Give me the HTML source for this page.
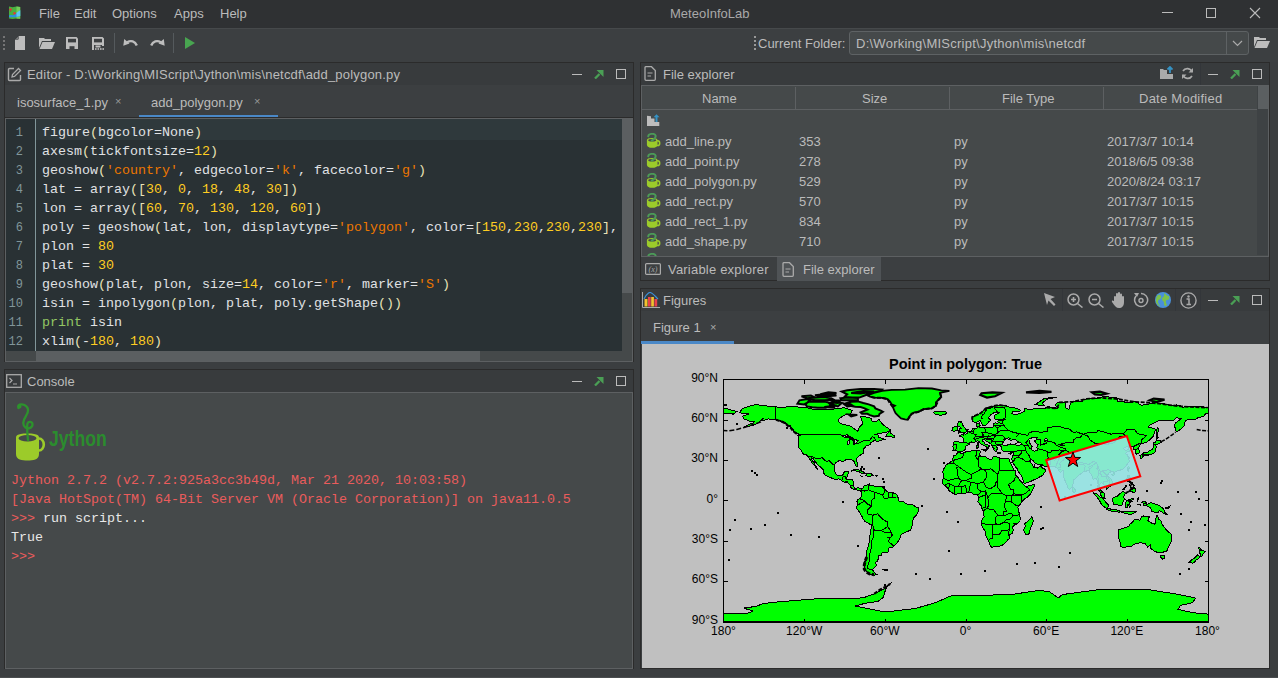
<!DOCTYPE html>
<html><head><meta charset="utf-8">
<style>
*{margin:0;padding:0;box-sizing:border-box}
html,body{width:1278px;height:678px;overflow:hidden;background:#3b3e40;font-family:"Liberation Sans",sans-serif;font-size:13px;color:#bbbbbb}
.a{position:absolute}
.t{position:absolute;white-space:pre;line-height:1}
.mono{font-family:"Liberation Mono",monospace;font-size:13.33px}
.hdr{position:absolute;background:#383b3d;border:1px solid #2b2b2b}
.ic{position:absolute}
</style></head><body>
<!-- menubar -->
<div class="a" style="left:0;top:0;width:1278px;height:28px;background:#2f3133"></div>
<svg class="ic" style="left:8px;top:6px" width="14" height="14" viewBox="0 0 14 14">
 <path d="M1 0.6L4.5 1.2L8.5 0.4L12.2 1V12.8L8.5 12.4L4.5 13L1 12.4Z" fill="#48b040"/>
 <path d="M8.5 0.4L12.2 1V12.8L8.5 12.4Z" fill="#74cc5a"/>
 <path d="M1 9.5C3 8.5 5 9.8 7 8.5C9 7.3 10.5 6 12.2 4.2V10C10 10.5 8 11.5 6 11.3C4 11 2.5 11.5 1 11Z" fill="#2d8fe0"/>
 <path d="M8.5 6.8L12.2 4.2V10L8.5 10.8Z" fill="#5cc8f0"/>
 <circle cx="2.6" cy="3.5" r="1.3" fill="#e03a3a"/><path d="M2.6 4.5V6" stroke="#a04040" stroke-width="0.6"/>
 <circle cx="6.5" cy="7.2" r="1.2" fill="#e03a3a"/>
</svg>
<div class="t" style="left:39px;top:7px;color:#bbbbbb">File</div>
<div class="t" style="left:74px;top:7px">Edit</div>
<div class="t" style="left:112px;top:7px">Options</div>
<div class="t" style="left:174px;top:7px">Apps</div>
<div class="t" style="left:220px;top:7px">Help</div>
<div class="t" style="left:670px;top:7px;color:#a9a9a9">MeteoInfoLab</div>
<div class="a" style="left:1162px;top:12px;width:11px;height:1px;background:#bbb"></div>
<div class="a" style="left:1206px;top:8px;width:10px;height:10px;border:1px solid #bbb"></div>
<svg class="ic" style="left:1249px;top:7px" width="12" height="12" viewBox="0 0 12 12"><path d="M1 1L11 11M11 1L1 11" stroke="#bbb" stroke-width="1.1"/></svg>

<!-- toolbar -->
<div class="a" style="left:0;top:28px;width:1278px;height:34px;background:#3c3f41;border-top:1px solid #46494b"></div>
<svg class="ic" style="left:2px;top:35px" width="4" height="16"><circle cx="2" cy="2" r="1" fill="#888"/><circle cx="2" cy="6" r="1" fill="#888"/><circle cx="2" cy="10" r="1" fill="#888"/><circle cx="2" cy="14" r="1" fill="#888"/></svg>
<svg class="ic" style="left:15px;top:36px" width="10" height="14" viewBox="0 0 10 14"><path d="M4 0H10V14H0V4Z" fill="#bdbdbd"/><path d="M3.2 0.5V3.2H0.5" stroke="#3c3f41" stroke-width="0.9" fill="none"/></svg>
<svg class="ic" style="left:39px;top:37px" width="16" height="12" viewBox="0 0 16 12"><path d="M0 1H5L6 2H12V4H3L0 11Z" fill="#bdbdbd"/><path d="M3.5 5H16L13 12H0.5Z" fill="#bdbdbd"/></svg>
<svg class="ic" style="left:66px;top:37px" width="12" height="12" viewBox="0 0 12 12"><path d="M0 0H10.5L12 1.5V12H0Z" fill="#bdbdbd"/><rect x="2" y="1.8" width="8" height="3.6" fill="#3c3f41"/><rect x="3.5" y="9.2" width="5" height="2.8" fill="#3c3f41"/></svg>
<svg class="ic" style="left:92px;top:37px" width="12" height="13" viewBox="0 0 12 13"><path d="M0 0H10.5L12 1.5V9H10V8H2V13H0Z" fill="#bdbdbd"/><rect x="2" y="1.8" width="8" height="3.6" fill="#3c3f41"/><rect x="3.5" y="8.5" width="5" height="2" fill="#bdbdbd"/><rect x="3" y="11.2" width="1.6" height="1.6" fill="#bdbdbd"/><rect x="5.5" y="11.2" width="1.6" height="1.6" fill="#bdbdbd"/><rect x="8" y="11.2" width="1.6" height="1.6" fill="#bdbdbd"/><rect x="10.4" y="11.2" width="1.6" height="1.6" fill="#bdbdbd"/></svg>
<div class="a" style="left:114px;top:33px;width:1px;height:20px;background:#555a5d"></div>
<svg class="ic" style="left:123px;top:38px" width="15" height="9" viewBox="0 0 15 9"><path d="M4 4.2C8 2.2 12 3 13.8 7.5" stroke="#bdbdbd" stroke-width="2.4" fill="none"/><path d="M0.3 7.8L1.2 1L6.5 5.5Z" fill="#bdbdbd"/></svg>
<svg class="ic" style="left:150px;top:38px" width="15" height="9" viewBox="0 0 15 9"><path d="M11 4.2C7 2.2 3 3 1.2 7.5" stroke="#bdbdbd" stroke-width="2.4" fill="none"/><path d="M14.7 7.8L13.8 1L8.5 5.5Z" fill="#bdbdbd"/></svg>
<div class="a" style="left:173px;top:33px;width:1px;height:20px;background:#555a5d"></div>
<svg class="ic" style="left:185px;top:37px" width="11" height="12" viewBox="0 0 11 12"><path d="M0 0L10 6L0 12Z" fill="#48a550"/></svg>
<svg class="ic" style="left:753px;top:35px" width="3" height="16"><rect x="1" y="1" width="2" height="2" fill="#999"/><rect x="1" y="5" width="2" height="2" fill="#999"/><rect x="1" y="9" width="2" height="2" fill="#999"/><rect x="1" y="13" width="2" height="2" fill="#999"/></svg>
<div class="t" style="left:758px;top:37px;color:#bbb">Current Folder:</div>
<div class="a" style="left:849px;top:31px;width:400px;height:24px;background:#45494a;border:1px solid #5e6264;border-radius:3px"></div>
<div class="a" style="left:1226px;top:32px;width:1px;height:22px;background:#5e6264"></div>
<svg class="ic" style="left:1232px;top:40px" width="11" height="7" viewBox="0 0 11 7"><path d="M1 1L5.5 5.5L10 1" stroke="#aaa" stroke-width="1.2" fill="none"/></svg>
<div class="t" style="left:856px;top:37px;color:#bbb;letter-spacing:0.25px">D:\Working\MIScript\Jython\mis\netcdf</div>
<svg class="ic" style="left:1254px;top:36px" width="16" height="12" viewBox="0 0 16 12"><path d="M0 1H5L6 2H12V4H3L0 11Z" fill="#bdbdbd"/><path d="M3.5 5H16L13 12H0.5Z" fill="#bdbdbd"/></svg>

<!-- ===== Editor panel ===== -->
<div class="a" style="left:4px;top:62px;width:630px;height:300px;background:#3c3f41;border:1px solid #2b2b2b"></div>
<div class="a" style="left:5px;top:63px;width:628px;height:22px;background:#383b3d"></div>
<svg class="ic" style="left:7px;top:67px" width="15" height="15" viewBox="0 0 15 15"><path d="M7 1.5H2.5A1 1 0 0 0 1.5 2.5V12.5A1 1 0 0 0 2.5 13.5H12.5A1 1 0 0 0 13.5 12.5V8" stroke="#aaa" stroke-width="1.4" fill="none"/><path d="M11.5 1.5L13.5 3.5L7.5 9.5L5 10L5.5 7.5Z" stroke="#aaa" stroke-width="1.3" fill="none"/></svg>
<div class="t" style="left:27px;top:68px;color:#bbb;letter-spacing:0.2px">Editor - D:\Working\MIScript\Jython\mis\netcdf\add_polygon.py</div>
<div class="a" style="left:572px;top:74px;width:10px;height:1px;background:#bbb"></div>
<svg class="ic" style="left:594px;top:69px" width="10" height="10" viewBox="0 0 10 10"><path d="M1 9.5L5.5 5" stroke="#4a9f55" stroke-width="2.3"/><path d="M2.5 1H9.5V8Z" fill="#4a9f55"/></svg>
<div class="a" style="left:616px;top:69px;width:10px;height:10px;border:1px solid #bbb"></div>
<!-- tabs -->
<div class="t" style="left:17px;top:96px;color:#bbb">isosurface_1.py</div>
<div class="t" style="left:115px;top:96px;font-size:11px;color:#999">×</div>
<div class="t" style="left:151px;top:96px;color:#bbb">add_polygon.py</div>
<div class="t" style="left:254px;top:96px;font-size:11px;color:#999">×</div>
<div class="a" style="left:139px;top:115px;width:139px;height:3px;background:#4a88c7"></div>
<!-- code area -->
<div class="a" style="left:4px;top:117px;width:630px;height:1px;background:#2b2b2b"></div>
<div class="a" style="left:5px;top:118px;width:628px;height:244px;border:1px solid #5d6062;background:#45494a"></div>
<div class="a" style="left:6px;top:119px;width:616px;height:232px;background:#293134"></div>
<div class="a" style="left:35px;top:119px;width:1px;height:232px;background:#81969a"></div>
<div class="a" style="left:36px;top:119px;width:586px;height:21px;background:#2f393c"></div>
<div class="a" style="left:622px;top:119px;width:10px;height:174px;background:#5b5f61"></div>
<div class="a" style="left:36px;top:351px;width:444px;height:10px;background:#5b5f61"></div>
<div class="a mono" style="left:5px;top:123.5px;width:18px;text-align:right;line-height:19px;font-size:12px;color:#81969a">1<br>2<br>3<br>4<br>5<br>6<br>7<br>8<br>9<br>10<br>11<br>12</div>
<div class="a mono" style="left:42px;top:122.5px;line-height:19px;color:#e0e2e4;white-space:pre">figure<span style="color:#e8e2b7">(</span>bgcolor=None<span style="color:#e8e2b7">)</span>
axesm<span style="color:#e8e2b7">(</span>tickfontsize=<span style="color:#ffcd22">12</span><span style="color:#e8e2b7">)</span>
geoshow<span style="color:#e8e2b7">(</span><span style="color:#ec7600">'country'</span>, edgecolor=<span style="color:#ec7600">'k'</span>, facecolor=<span style="color:#ec7600">'g'</span><span style="color:#e8e2b7">)</span>
lat = array<span style="color:#e8e2b7">([</span><span style="color:#ffcd22">30</span>, <span style="color:#ffcd22">0</span>, <span style="color:#ffcd22">18</span>, <span style="color:#ffcd22">48</span>, <span style="color:#ffcd22">30</span><span style="color:#e8e2b7">])</span>
lon = array<span style="color:#e8e2b7">([</span><span style="color:#ffcd22">60</span>, <span style="color:#ffcd22">70</span>, <span style="color:#ffcd22">130</span>, <span style="color:#ffcd22">120</span>, <span style="color:#ffcd22">60</span><span style="color:#e8e2b7">])</span>
poly = geoshow<span style="color:#e8e2b7">(</span>lat, lon, displaytype=<span style="color:#ec7600">'polygon'</span>, color=<span style="color:#e8e2b7">[</span><span style="color:#ffcd22">150</span>,<span style="color:#ffcd22">230</span>,<span style="color:#ffcd22">230</span>,<span style="color:#ffcd22">230</span><span style="color:#e8e2b7">]</span>,
plon = <span style="color:#ffcd22">80</span>
plat = <span style="color:#ffcd22">30</span>
geoshow<span style="color:#e8e2b7">(</span>plat, plon, size=<span style="color:#ffcd22">14</span>, color=<span style="color:#ec7600">'r'</span>, marker=<span style="color:#ec7600">'S'</span><span style="color:#e8e2b7">)</span>
isin = inpolygon<span style="color:#e8e2b7">(</span>plon, plat, poly.getShape<span style="color:#e8e2b7">())</span>
<span style="color:#93c763">print</span> isin
xlim<span style="color:#e8e2b7">(</span>-<span style="color:#ffcd22">180</span>, <span style="color:#ffcd22">180</span><span style="color:#e8e2b7">)</span></div>

<!-- ===== Console panel ===== -->
<div class="a" style="left:4px;top:369px;width:630px;height:300px;background:#3c3f41;border:1px solid #2b2b2b"></div>
<div class="a" style="left:5px;top:370px;width:628px;height:22px;background:#383b3d"></div>
<svg class="ic" style="left:6px;top:374px" width="16" height="14" viewBox="0 0 16 14"><rect x="0.7" y="0.7" width="14.6" height="12.6" stroke="#aaa" stroke-width="1.3" fill="none"/><path d="M3.5 4L6 6.5L3.5 9M7 10H11" stroke="#aaa" stroke-width="1.2" fill="none"/></svg>
<div class="t" style="left:27px;top:375px;color:#bbb">Console</div>
<div class="a" style="left:572px;top:381px;width:10px;height:1px;background:#bbb"></div>
<svg class="ic" style="left:594px;top:376px" width="10" height="10" viewBox="0 0 10 10"><path d="M1 9.5L5.5 5" stroke="#4a9f55" stroke-width="2.3"/><path d="M2.5 1H9.5V8Z" fill="#4a9f55"/></svg>
<div class="a" style="left:616px;top:376px;width:10px;height:10px;border:1px solid #bbb"></div>
<div class="a" style="left:5px;top:392px;width:628px;height:277px;border:1px solid #5d6062;background:#45494a"></div>
<!-- jython logo -->
<svg class="ic" style="left:0px;top:398px" width="50" height="66" viewBox="0 398 50 66">
 <path d="M27.5,433.5 C16,433.5 16,436 16,438 V454 C16,460 22,460.5 27.5,460.5 C33,460.5 39,460 39,454 V438 C39,436 39,433.5 27.5,433.5Z" fill="#9ccb2a"/>
 <ellipse cx="39" cy="444.5" rx="4.8" ry="6" stroke="#9ccb2a" stroke-width="2.6" fill="none"/>
 <ellipse cx="27.5" cy="438.3" rx="9" ry="3.2" fill="#45494a"/>
 <path d="M18.5,408 C17,404.5 21,403.5 24.5,405 C29.5,407.5 28.5,412 26,416 C23,420.5 22.5,425 25.5,427.5 C28.5,429.5 32.5,427.5 32.5,424.5 C32.5,421.5 28.5,421 27.5,423.5 C26.5,427 27.5,434 28,440" stroke="#2d922d" stroke-width="2.3" fill="none" stroke-linecap="round"/>
 <circle cx="19.5" cy="406.5" r="2" fill="#2d922d"/>
</svg>
<div class="t" style="left:49px;top:428px;color:#2b8c2e;font-size:22px;font-weight:bold;transform:scaleX(0.8);transform-origin:0 0">Jython</div>
<div class="a mono" style="left:11px;top:472px;line-height:18.9px;color:#ea5c5c;white-space:pre">Jython 2.7.2 (v2.7.2:925a3cc3b49d, Mar 21 2020, 10:03:58)
[Java HotSpot(TM) 64-Bit Server VM (Oracle Corporation)] on java11.0.5
&gt;&gt;&gt; <span style="color:#e8e8e8">run script...</span>
<span style="color:#e8e8e8">True</span>
&gt;&gt;&gt; </div>

<!-- ===== File explorer ===== -->
<div class="a" style="left:640px;top:62px;width:630px;height:219px;background:#3c3f41;border:1px solid #2b2b2b"></div>
<div class="a" style="left:641px;top:63px;width:628px;height:22px;background:#383b3d"></div>
<svg class="ic" style="left:644px;top:66px" width="12" height="15" viewBox="0 0 12 15"><path d="M1 1.5A1 1 0 0 1 2 0.7H7.5L11.3 4.5V13.3A1 1 0 0 1 10.3 14.3H2A1 1 0 0 1 1 13.3Z" stroke="#aaa" stroke-width="1.3" fill="none"/><path d="M3.5 7H8.5M3.5 10H7" stroke="#aaa" stroke-width="1.2"/></svg>
<div class="t" style="left:663px;top:68px;color:#bbb">File explorer</div>
<svg class="ic" style="left:1160px;top:66px" width="13" height="13" viewBox="0 0 13 13"><path d="M0 3H3L4 4H7V13H0Z M7 8H13V13H7Z" fill="#aaa"/><path d="M10 7V1M7.5 3.5L10 1L12.5 3.5" stroke="#3592c4" stroke-width="1.8" fill="none"/></svg>
<svg class="ic" style="left:1181px;top:67px" width="13" height="13" viewBox="0 0 13 13"><path d="M11 5A5 5 0 0 0 2 4M2 8A5 5 0 0 0 11 9" stroke="#aaa" stroke-width="1.7" fill="none"/><path d="M12 1V5.5H7.5Z M1 12V7.5H5.5Z" fill="#aaa"/></svg>
<div class="a" style="left:1200px;top:63px;width:1px;height:22px;background:#33363a"></div>
<div class="a" style="left:1208px;top:74px;width:10px;height:1px;background:#bbb"></div>
<svg class="ic" style="left:1230px;top:69px" width="10" height="10" viewBox="0 0 10 10"><path d="M1 9.5L5.5 5" stroke="#4a9f55" stroke-width="2.3"/><path d="M2.5 1H9.5V8Z" fill="#4a9f55"/></svg>
<div class="a" style="left:1252px;top:69px;width:10px;height:10px;border:1px solid #bbb"></div>
<!-- table -->
<div class="a" style="left:641px;top:85px;width:628px;height:172px;background:#45494a;border:1px solid #5d6062"></div>
<div class="a" style="left:642px;top:86px;width:615px;height:24px;background:#45494a;border-bottom:1px solid #5d6062"></div>
<div class="a" style="left:795px;top:87px;width:1px;height:22px;background:#5d6062"></div>
<div class="a" style="left:949px;top:87px;width:1px;height:22px;background:#5d6062"></div>
<div class="a" style="left:1103px;top:87px;width:1px;height:22px;background:#5d6062"></div>
<div class="t" style="left:702px;top:92px">Name</div>
<div class="t" style="left:862px;top:92px">Size</div>
<div class="t" style="left:1002px;top:92px">File Type</div>
<div class="t" style="left:1139px;top:92px;letter-spacing:0.25px">Date Modified</div>
<div class="a" style="left:1257px;top:86px;width:11px;height:169px;background:#3e4244"></div>
<div class="a" style="left:1258px;top:86px;width:10px;height:23px;background:#5b5f61"></div>
<svg class="ic" style="left:647px;top:114px" width="13" height="13" viewBox="0 0 13 13"><path d="M0 1.8L4 2.2V4.5H7.5V8H12.3V12H0Z" fill="#bdbdbd"/><path d="M9.5 8V2.5" stroke="#3592c4" stroke-width="2" fill="none"/><path d="M6.5 3.3L9.5 0.2L12.5 3.3Z" fill="#3592c4"/></svg>
<svg class="ic" style="left:646px;top:133px" width="16" height="16" viewBox="0 0 16 16"><path d="M0.9 7V11.5C0.9 14 3.5 14.8 6.2 14.8C9 14.8 11.5 14 11.5 11.5V7Z" fill="#9ccb2a"/><ellipse cx="6.2" cy="7" rx="5.3" ry="2.1" fill="#9ccb2a"/><ellipse cx="11.6" cy="10.2" rx="2.1" ry="2.4" stroke="#9ccb2a" stroke-width="1.5" fill="none"/><ellipse cx="6.2" cy="7.3" rx="4" ry="1.3" fill="#45494a"/><path d="M2.2 3.3C2.5 0.8 7.5 0 9.2 1.8C10.8 3.8 8.2 6 5.8 7.6" stroke="#4c9a58" stroke-width="1.9" fill="none" stroke-linecap="round"/></svg>
<div class="t" style="left:665px;top:135px">add_line.py</div>
<div class="t" style="left:799px;top:135px">353</div>
<div class="t" style="left:954px;top:135px">py</div>
<div class="t" style="left:1107px;top:135px">2017/3/7 10:14</div>
<svg class="ic" style="left:646px;top:153px" width="16" height="16" viewBox="0 0 16 16"><path d="M0.9 7V11.5C0.9 14 3.5 14.8 6.2 14.8C9 14.8 11.5 14 11.5 11.5V7Z" fill="#9ccb2a"/><ellipse cx="6.2" cy="7" rx="5.3" ry="2.1" fill="#9ccb2a"/><ellipse cx="11.6" cy="10.2" rx="2.1" ry="2.4" stroke="#9ccb2a" stroke-width="1.5" fill="none"/><ellipse cx="6.2" cy="7.3" rx="4" ry="1.3" fill="#45494a"/><path d="M2.2 3.3C2.5 0.8 7.5 0 9.2 1.8C10.8 3.8 8.2 6 5.8 7.6" stroke="#4c9a58" stroke-width="1.9" fill="none" stroke-linecap="round"/></svg>
<div class="t" style="left:665px;top:155px">add_point.py</div>
<div class="t" style="left:799px;top:155px">278</div>
<div class="t" style="left:954px;top:155px">py</div>
<div class="t" style="left:1107px;top:155px">2018/6/5 09:38</div>
<svg class="ic" style="left:646px;top:173px" width="16" height="16" viewBox="0 0 16 16"><path d="M0.9 7V11.5C0.9 14 3.5 14.8 6.2 14.8C9 14.8 11.5 14 11.5 11.5V7Z" fill="#9ccb2a"/><ellipse cx="6.2" cy="7" rx="5.3" ry="2.1" fill="#9ccb2a"/><ellipse cx="11.6" cy="10.2" rx="2.1" ry="2.4" stroke="#9ccb2a" stroke-width="1.5" fill="none"/><ellipse cx="6.2" cy="7.3" rx="4" ry="1.3" fill="#45494a"/><path d="M2.2 3.3C2.5 0.8 7.5 0 9.2 1.8C10.8 3.8 8.2 6 5.8 7.6" stroke="#4c9a58" stroke-width="1.9" fill="none" stroke-linecap="round"/></svg>
<div class="t" style="left:665px;top:175px">add_polygon.py</div>
<div class="t" style="left:799px;top:175px">529</div>
<div class="t" style="left:954px;top:175px">py</div>
<div class="t" style="left:1107px;top:175px">2020/8/24 03:17</div>
<svg class="ic" style="left:646px;top:193px" width="16" height="16" viewBox="0 0 16 16"><path d="M0.9 7V11.5C0.9 14 3.5 14.8 6.2 14.8C9 14.8 11.5 14 11.5 11.5V7Z" fill="#9ccb2a"/><ellipse cx="6.2" cy="7" rx="5.3" ry="2.1" fill="#9ccb2a"/><ellipse cx="11.6" cy="10.2" rx="2.1" ry="2.4" stroke="#9ccb2a" stroke-width="1.5" fill="none"/><ellipse cx="6.2" cy="7.3" rx="4" ry="1.3" fill="#45494a"/><path d="M2.2 3.3C2.5 0.8 7.5 0 9.2 1.8C10.8 3.8 8.2 6 5.8 7.6" stroke="#4c9a58" stroke-width="1.9" fill="none" stroke-linecap="round"/></svg>
<div class="t" style="left:665px;top:195px">add_rect.py</div>
<div class="t" style="left:799px;top:195px">570</div>
<div class="t" style="left:954px;top:195px">py</div>
<div class="t" style="left:1107px;top:195px">2017/3/7 10:15</div>
<svg class="ic" style="left:646px;top:213px" width="16" height="16" viewBox="0 0 16 16"><path d="M0.9 7V11.5C0.9 14 3.5 14.8 6.2 14.8C9 14.8 11.5 14 11.5 11.5V7Z" fill="#9ccb2a"/><ellipse cx="6.2" cy="7" rx="5.3" ry="2.1" fill="#9ccb2a"/><ellipse cx="11.6" cy="10.2" rx="2.1" ry="2.4" stroke="#9ccb2a" stroke-width="1.5" fill="none"/><ellipse cx="6.2" cy="7.3" rx="4" ry="1.3" fill="#45494a"/><path d="M2.2 3.3C2.5 0.8 7.5 0 9.2 1.8C10.8 3.8 8.2 6 5.8 7.6" stroke="#4c9a58" stroke-width="1.9" fill="none" stroke-linecap="round"/></svg>
<div class="t" style="left:665px;top:215px">add_rect_1.py</div>
<div class="t" style="left:799px;top:215px">834</div>
<div class="t" style="left:954px;top:215px">py</div>
<div class="t" style="left:1107px;top:215px">2017/3/7 10:15</div>
<svg class="ic" style="left:646px;top:233px" width="16" height="16" viewBox="0 0 16 16"><path d="M0.9 7V11.5C0.9 14 3.5 14.8 6.2 14.8C9 14.8 11.5 14 11.5 11.5V7Z" fill="#9ccb2a"/><ellipse cx="6.2" cy="7" rx="5.3" ry="2.1" fill="#9ccb2a"/><ellipse cx="11.6" cy="10.2" rx="2.1" ry="2.4" stroke="#9ccb2a" stroke-width="1.5" fill="none"/><ellipse cx="6.2" cy="7.3" rx="4" ry="1.3" fill="#45494a"/><path d="M2.2 3.3C2.5 0.8 7.5 0 9.2 1.8C10.8 3.8 8.2 6 5.8 7.6" stroke="#4c9a58" stroke-width="1.9" fill="none" stroke-linecap="round"/></svg>
<div class="t" style="left:665px;top:235px">add_shape.py</div>
<div class="t" style="left:799px;top:235px">710</div>
<div class="t" style="left:954px;top:235px">py</div>
<div class="t" style="left:1107px;top:235px">2017/3/7 10:15</div>
<div class="a" style="left:641px;top:253px;width:616px;height:3px;overflow:hidden"><svg class="ic" style="left:5px;top:0px" width="16" height="16" viewBox="0 0 16 16"><path d="M0.9 7V11.5C0.9 14 3.5 14.8 6.2 14.8C9 14.8 11.5 14 11.5 11.5V7Z" fill="#9ccb2a"/><ellipse cx="6.2" cy="7" rx="5.3" ry="2.1" fill="#9ccb2a"/><ellipse cx="11.6" cy="10.2" rx="2.1" ry="2.4" stroke="#9ccb2a" stroke-width="1.5" fill="none"/><ellipse cx="6.2" cy="7.3" rx="4" ry="1.3" fill="#45494a"/><path d="M2.2 3.3C2.5 0.8 7.5 0 9.2 1.8C10.8 3.8 8.2 6 5.8 7.6" stroke="#4c9a58" stroke-width="1.9" fill="none" stroke-linecap="round"/></svg></div>
<!-- bottom tabs -->
<div class="a" style="left:777px;top:257px;width:104px;height:24px;background:#4f5356"></div>
<svg class="ic" style="left:645px;top:263px" width="16" height="12" viewBox="0 0 16 12"><rect x="0.6" y="0.6" width="14.8" height="10.8" stroke="#aaa" stroke-width="1.2" fill="none" rx="1"/><text x="8" y="9" font-size="8" font-family="Liberation Serif" font-style="italic" fill="#aaa" text-anchor="middle">(x)</text></svg>
<div class="t" style="left:668px;top:263px;letter-spacing:0.2px">Variable explorer</div>
<svg class="ic" style="left:782px;top:262px" width="12" height="15" viewBox="0 0 12 15"><path d="M1 1.5A1 1 0 0 1 2 0.7H7.5L11.3 4.5V13.3A1 1 0 0 1 10.3 14.3H2A1 1 0 0 1 1 13.3Z" stroke="#aaa" stroke-width="1.3" fill="none"/><path d="M3.5 7H8.5M3.5 10H7" stroke="#aaa" stroke-width="1.2"/></svg>
<div class="t" style="left:803px;top:263px">File explorer</div>

<!-- ===== Figures ===== -->
<div class="a" style="left:640px;top:288px;width:630px;height:381px;background:#3c3f41;border:1px solid #2b2b2b"></div>
<div class="a" style="left:641px;top:289px;width:628px;height:22px;background:#383b3d"></div>
<svg class="ic" style="left:642px;top:292px" width="18" height="16" viewBox="0 0 18 16"><path d="M0.5 0V15.5H18" stroke="#aaa" stroke-width="1" fill="none"/><rect x="2.5" y="7" width="3" height="7.5" fill="#f2c12e"/><rect x="6" y="5" width="2.7" height="9.5" fill="#e8404a"/><rect x="9.2" y="5" width="2.7" height="9.5" fill="#f2c12e"/><rect x="12.4" y="7" width="2.8" height="7.5" fill="#e8404a"/><path d="M2 7C5 0.5 8 0 9 0.8C11 1.5 13 4 16 7" stroke="#3a8fd8" stroke-width="1.2" fill="none"/></svg>
<div class="t" style="left:663px;top:294px">Figures</div>
<svg class="ic" style="left:1044px;top:293px" width="12" height="13" viewBox="0 0 12 13"><path d="M0 0L11 4L6.5 6L11.5 11.5L10 13L4.5 7.5L3 12Z" fill="#aaa"/></svg>
<div class="a" style="left:1062px;top:289px;width:1px;height:22px;background:#33363a"></div>
<svg class="ic" style="left:1067px;top:293px" width="17" height="15" viewBox="0 0 17 15"><circle cx="6.5" cy="6.5" r="5.5" stroke="#aaa" stroke-width="1.5" fill="none"/><path d="M10.5 10.5L15.5 14.5M4 6.5H9M6.5 4V9" stroke="#aaa" stroke-width="1.6"/></svg>
<svg class="ic" style="left:1088px;top:293px" width="17" height="15" viewBox="0 0 17 15"><circle cx="6.5" cy="6.5" r="5.5" stroke="#aaa" stroke-width="1.5" fill="none"/><path d="M10.5 10.5L15.5 14.5M4 6.5H9" stroke="#aaa" stroke-width="1.6"/></svg>
<svg class="ic" style="left:1111px;top:292px" width="16" height="16" viewBox="0 0 16 16"><path d="M3 9V5A1 1 0 0 1 5 5V8V2A1 1 0 0 1 7 2V7V1A1 1 0 0 1 9 1V7V2.5A1 1 0 0 1 11 2.5V8V5A1 1 0 0 1 13 5V10C13 14 11 16 8 16C5 16 4 14 1 10C0.5 9 1.5 8 2.5 9Z" fill="#aaa"/></svg>
<svg class="ic" style="left:1133px;top:292px" width="16" height="16" viewBox="0 0 16 16"><path d="M3 4A6.5 6.5 0 1 0 8 1.5" stroke="#aaa" stroke-width="1.5" fill="none"/><path d="M1 1L4 5L6 1Z" fill="#aaa"/><circle cx="8" cy="8.5" r="2" stroke="#aaa" stroke-width="1.4" fill="none"/></svg>
<svg class="ic" style="left:1155px;top:292px" width="16" height="16" viewBox="0 0 16 16"><circle cx="8" cy="8" r="8" fill="#4a90d9"/><path d="M3 3C5 2 7 4 6 6C5 8 3 7 3 10C3 12 5 13 5 15L2 12C0 9 1 5 3 3Z M9 1C11 2 12 4 14 4C15 6 14 8 12 8C10 8 11 11 12 13C10 15 9 14 9 11C9 9 7 9 7 7C7 5 10 5 9 1Z" fill="#7cc04a"/></svg>
<div class="a" style="left:1175px;top:289px;width:1px;height:22px;background:#33363a"></div>
<svg class="ic" style="left:1180px;top:292px" width="17" height="17" viewBox="0 0 17 17"><circle cx="8.5" cy="8.5" r="7.6" stroke="#aaa" stroke-width="1.4" fill="none"/><circle cx="8.5" cy="4.5" r="1.2" fill="#aaa"/><path d="M6.5 7H9V12.5M6.5 12.5H11" stroke="#aaa" stroke-width="1.5" fill="none"/></svg>
<div class="a" style="left:1200px;top:289px;width:1px;height:22px;background:#33363a"></div>
<div class="a" style="left:1208px;top:300px;width:10px;height:1px;background:#bbb"></div>
<svg class="ic" style="left:1230px;top:295px" width="10" height="10" viewBox="0 0 10 10"><path d="M1 9.5L5.5 5" stroke="#4a9f55" stroke-width="2.3"/><path d="M2.5 1H9.5V8Z" fill="#4a9f55"/></svg>
<div class="a" style="left:1252px;top:295px;width:10px;height:10px;border:1px solid #bbb"></div>
<div class="t" style="left:653px;top:321px">Figure 1</div>
<div class="t" style="left:710px;top:322px;font-size:11px;color:#aaa">×</div>
<div class="a" style="left:641px;top:341px;width:93px;height:3px;background:#4a88c7"></div>
<div class="a" style="left:642px;top:344px;width:627px;height:324px;background:#c0c0c0"></div>
<div class="t" style="left:889px;top:357px;color:#000;font-weight:bold;font-size:14.5px">Point in polygon: True</div>
<svg width="486" height="244" viewBox="-0.5 -0.5 486 244" style="position:absolute;left:723px;top:379px;overflow:visible">
<defs><clipPath id="cp"><rect x="0" y="0" width="485" height="243"/></clipPath></defs>
<g clip-path="url(#cp)">

<path d="M16.1,32.8 18.8,29.2 22.9,27.6 31.6,25.1 37.6,25.8 47.1,26.9 52.4,27.3 59.2,28.2 64.5,27.2 69.9,26.6 75.3,27.6 83.4,28.2 88.7,29.6 96.8,29.6 104.9,30.2 110.2,29.6 114.3,28.9 121.0,28.2 125.0,29.6 129.1,30.9 126.4,35.0 121.0,35.6 115.6,39.0 115.0,41.7 117.6,44.4 123.7,45.7 127.7,46.8 131.1,49.7 134.4,51.8 135.8,47.7 138.5,45.0 138.5,41.7 137.1,37.2 143.9,37.6 147.9,39.0 148.6,41.7 153.3,41.9 155.3,39.9 159.3,45.0 164.0,48.4 167.4,50.7 162.7,53.1 156.0,53.8 151.9,54.9 155.3,55.8 155.3,57.8 160.0,59.2 161.3,59.8 156.0,61.2 153.3,62.1 151.9,60.8 149.2,61.8 147.2,63.2 147.2,64.8 145.2,65.6 142.5,66.4 141.2,68.6 139.8,69.6 139.8,71.3 140.2,73.3 138.5,74.6 135.8,76.4 133.1,78.6 133.1,80.7 134.2,84.7 133.8,87.1 132.8,87.0 131.1,84.0 130.7,82.0 129.1,80.7 126.4,80.1 122.3,80.3 120.3,81.9 115.6,81.2 111.6,83.6 110.9,87.4 110.5,90.8 111.6,93.0 113.6,95.7 115.0,96.5 119.0,96.1 120.3,93.4 121.0,92.5 125.0,92.1 124.4,94.8 123.4,98.1 123.0,99.8 126.4,99.8 129.1,100.4 130.0,102.2 129.5,106.2 131.8,108.9 135.1,108.2 137.8,109.6 138.2,110.5 137.1,111.6 134.4,110.9 133.1,110.2 129.7,109.8 127.0,107.6 126.8,105.9 124.4,103.5 121.7,102.9 119.0,102.2 117.0,100.2 115.0,99.4 112.3,99.9 109.6,99.2 105.5,97.5 101.5,95.5 100.2,93.4 100.4,90.8 98.8,89.4 96.8,87.4 95.1,86.0 92.8,83.5 91.0,81.3 90.1,79.3 87.8,78.4 88.5,80.7 90.8,83.4 91.4,85.4 93.4,88.5 94.1,90.1 92.1,88.1 91.2,86.0 88.7,83.8 87.4,81.3 86.0,79.3 84.6,77.3 82.7,75.3 79.9,74.6 78.2,71.9 77.3,70.2 75.7,68.6 74.9,66.6 74.9,63.9 75.3,59.2 74.3,56.1 76.6,55.8 73.9,53.8 70.6,52.4 69.9,50.4 67.2,47.7 64.5,45.7 61.8,43.0 57.8,41.9 54.5,40.6 49.7,40.3 45.0,39.4 41.7,40.5 38.3,41.4 39.7,38.7 36.3,41.7 35.0,43.3 31.6,45.0 28.2,46.2 24.2,47.1 20.8,47.7 24.9,45.4 29.6,43.3 30.9,41.9 26.9,42.2 24.2,40.6 20.8,39.7 19.8,37.9 18.8,37.0 20.8,36.0 25.5,34.4 22.2,34.1 18.8,34.3Z M137.8,109.6 139.8,108.2 140.5,106.5 143.9,105.5 145.9,104.3 146.5,106.2 148.6,105.4 150.6,106.7 153.3,106.7 156.0,106.6 158.6,106.6 160.0,108.9 161.3,109.8 163.4,111.9 165.4,112.9 169.4,113.2 172.1,114.4 173.4,115.6 174.8,118.6 174.8,121.0 176.8,122.3 180.2,122.3 182.2,124.4 185.5,124.8 188.9,125.0 192.3,127.5 194.7,128.4 194.9,131.8 193.6,134.4 191.6,137.1 189.6,139.1 189.3,144.5 188.2,147.9 186.9,150.6 184.2,151.9 181.5,152.9 178.1,154.6 176.8,157.3 176.1,160.0 174.1,162.7 172.1,164.7 170.1,166.7 168.7,168.1 166.0,168.1 164.7,170.1 164.7,172.4 161.3,173.2 158.6,173.4 158.2,175.5 154.6,176.1 155.3,178.1 153.9,181.5 151.2,183.5 153.3,185.5 150.6,188.2 149.2,190.2 149.9,191.6 151.9,194.3 154.6,194.9 150.6,195.6 146.5,194.9 142.5,191.6 140.5,188.2 140.5,184.2 141.8,181.5 143.2,178.8 142.9,176.1 143.2,172.1 143.9,169.4 145.2,165.4 145.9,161.3 146.1,157.3 147.2,153.3 147.6,147.9 147.5,145.6 145.9,144.3 141.2,141.6 139.4,139.1 138.5,137.1 136.5,133.8 135.1,131.1 133.1,129.1 133.1,127.1 134.4,125.4 133.8,123.7 133.4,122.3 134.4,120.3 135.1,119.7 136.1,118.6 137.4,117.5 138.1,115.6 137.8,112.9 137.4,111.3Z M229.2,71.3 229.9,68.6 229.2,67.2 230.2,64.5 229.6,62.9 231.2,62.2 235.3,62.5 239.6,62.7 240.3,61.2 240.4,59.2 239.0,57.8 236.0,56.6 235.7,55.7 238.0,55.4 239.8,55.5 240.1,54.3 242.0,54.6 244.0,53.5 244.3,52.4 246.0,52.0 247.4,51.8 248.5,50.4 248.7,49.3 251.4,49.1 253.7,48.5 253.4,47.1 253.0,45.0 253.4,44.2 256.1,43.4 255.8,45.0 256.8,45.7 255.4,47.1 256.7,48.4 258.5,48.0 260.8,48.4 263.5,48.0 266.9,47.5 268.6,47.9 270.2,47.1 270.5,45.0 270.2,43.7 272.2,43.3 274.3,44.4 274.7,42.6 273.6,41.7 276.3,40.9 280.3,40.6 282.3,40.3 279.6,39.7 275.6,39.9 272.8,40.5 270.9,39.3 270.6,37.6 270.9,35.9 274.3,33.9 276.0,32.9 272.9,32.5 270.9,32.9 267.5,35.2 265.9,37.0 265.1,38.7 266.9,40.3 267.3,41.3 264.9,42.2 264.2,44.0 262.8,45.4 261.1,46.4 259.2,46.4 258.8,45.0 257.9,43.0 257.1,41.5 256.1,41.3 254.8,41.7 252.8,42.9 250.7,42.9 249.4,41.9 248.7,40.3 248.7,39.0 249.0,37.4 251.4,36.3 254.1,35.0 256.8,33.9 258.8,32.3 260.8,30.2 262.8,28.9 264.9,28.2 267.5,26.9 270.2,26.6 274.3,25.5 277.6,25.5 279.6,25.5 282.3,26.2 283.7,26.9 286.4,27.7 290.4,28.2 294.4,29.3 297.1,30.9 295.8,32.3 289.1,32.3 288.4,34.3 291.7,35.2 295.8,34.3 299.8,32.3 301.2,31.6 301.4,29.3 303.8,29.6 307.9,29.8 313.3,28.9 315.9,29.2 321.3,28.9 324.0,27.3 329.4,27.8 333.4,28.9 334.8,28.4 332.1,26.2 331.8,24.9 334.1,23.0 336.1,22.9 339.5,23.1 342.4,23.1 341.5,28.2 345.5,30.0 346.9,23.8 350.2,22.2 354.9,21.9 359.0,21.5 359.0,19.9 363.0,19.4 369.7,18.8 376.4,18.3 381.8,16.5 385.9,17.7 391.2,17.9 394.6,19.1 393.9,21.9 399.3,22.2 402.0,22.7 407.4,22.9 411.4,22.2 414.8,23.1 416.1,25.1 418.1,25.8 421.5,24.9 424.8,24.7 429.5,23.7 431.6,23.3 438.3,23.8 443.7,24.9 446.4,25.8 453.1,25.5 457.1,26.2 458.5,27.6 463.8,27.4 467.9,26.9 471.2,26.9 474.6,27.2 478.6,27.3 482.0,27.7 484.7,28.4 484.7,33.6 482.0,34.3 480.0,37.0 475.3,37.9 470.6,40.3 465.2,40.3 462.5,40.6 461.1,43.0 461.1,45.7 459.8,47.5 457.1,49.7 455.1,51.1 452.7,52.4 451.7,49.1 451.1,45.7 451.7,43.7 453.1,43.0 455.8,40.6 457.8,39.0 453.1,38.3 449.0,41.4 445.7,41.4 441.0,41.3 436.9,41.1 433.6,41.7 430.9,43.3 427.5,45.0 424.2,47.5 426.2,48.4 428.2,48.4 429.5,49.1 432.0,49.7 430.9,53.1 430.2,56.5 428.2,58.1 425.9,60.5 423.5,62.5 420.8,63.5 418.8,63.5 417.7,64.1 416.4,65.9 416.1,67.2 414.1,68.6 415.8,70.6 416.0,73.3 412.7,74.6 411.8,74.3 411.9,71.7 411.5,70.3 410.1,70.2 410.3,68.2 409.4,67.5 406.7,66.8 405.1,68.6 405.5,66.1 403.3,67.0 400.6,68.3 400.2,69.4 401.9,70.6 402.8,71.0 404.4,70.2 406.7,71.0 405.8,71.8 403.6,72.6 402.0,74.2 403.9,75.3 404.5,77.2 405.9,78.2 405.1,79.9 406.0,80.7 405.3,82.8 404.0,84.4 402.8,86.0 402.0,87.1 400.4,88.5 398.6,90.1 395.9,90.8 394.6,91.0 392.6,91.7 390.6,93.4 389.9,92.2 387.9,92.0 385.5,93.4 384.1,95.7 385.9,98.1 388.3,100.3 388.9,103.5 388.5,105.5 386.5,106.9 383.3,109.3 382.9,107.3 381.2,106.7 379.8,104.6 377.7,103.1 376.4,104.9 375.4,107.6 376.8,110.2 378.5,111.9 380.5,113.6 381.2,115.4 381.0,118.0 382.1,119.1 381.2,119.4 378.2,117.2 377.1,115.2 376.7,112.5 374.4,110.0 374.2,107.8 374.6,104.9 373.9,102.9 373.4,99.5 372.4,98.4 370.4,99.8 369.0,99.2 368.6,96.5 367.3,94.4 366.0,92.8 365.0,90.8 363.7,91.4 361.7,91.7 360.2,92.1 358.8,93.4 356.5,94.8 354.5,96.5 352.5,98.7 350.9,99.8 349.8,100.8 349.8,102.9 349.3,105.5 348.6,107.2 347.3,109.0 346.2,110.1 344.8,109.0 344.2,107.3 343.1,104.9 342.2,102.2 340.8,99.5 339.9,95.5 339.9,92.8 339.5,91.0 336.8,93.0 334.8,91.0 336.4,90.2 334.1,89.3 332.5,87.8 331.4,86.9 328.0,87.0 324.7,87.3 322.1,86.9 319.2,86.3 318.4,84.6 316.6,84.8 314.6,85.2 312.6,84.2 311.2,83.5 309.4,80.8 307.9,80.3 306.5,80.7 306.4,81.7 307.6,84.0 309.2,85.2 309.5,86.6 310.3,87.7 311.0,85.9 311.4,87.1 311.2,88.3 313.9,88.6 316.6,86.9 317.7,85.6 317.8,87.5 319.3,89.0 320.9,89.3 322.4,90.9 320.7,93.4 319.6,95.5 318.1,96.5 316.3,97.3 312.2,99.6 308.7,101.1 306.5,102.2 303.2,103.3 300.5,103.9 299.4,99.9 299.5,98.8 297.4,95.5 295.8,93.4 294.6,92.1 293.8,89.4 292.4,88.1 291.1,86.0 289.3,83.4 288.5,83.1 288.9,81.3 288.0,78.9 288.4,78.5 289.1,76.6 290.1,74.3 290.3,72.9 290.7,71.8 288.7,71.5 285.7,72.5 283.1,71.7 281.9,72.3 279.6,71.7 278.7,70.7 277.6,69.2 278.0,67.9 277.2,66.4 277.0,66.1 274.3,66.1 272.9,66.8 274.3,69.6 272.7,70.7 273.2,71.9 271.2,71.5 270.4,70.2 270.6,68.8 269.2,67.9 268.1,64.8 266.9,63.9 264.2,62.5 262.4,61.4 261.5,60.2 260.4,59.7 258.5,60.1 258.5,61.3 260.3,62.5 261.4,64.5 263.5,65.2 265.5,66.1 266.9,67.0 265.1,66.7 264.2,67.9 265.0,68.7 263.6,69.9 263.1,67.2 262.2,67.0 261.0,66.1 258.9,65.3 256.8,63.9 255.7,62.0 254.0,61.3 252.1,62.1 250.1,63.1 248.0,62.5 246.2,63.1 246.3,64.7 244.7,65.6 243.1,65.9 242.0,67.2 241.6,68.2 242.3,69.0 241.1,70.4 239.2,71.7 236.1,71.7 234.7,72.6 233.3,71.4 231.9,71.0 229.9,71.3Z M-0.7,28.2 6.7,30.2 13.4,32.0 10.1,34.4 2.7,34.3 -0.7,33.9Z M234.1,72.9 232.9,75.2 230.4,76.2 229.1,80.0 228.6,81.3 226.3,83.2 224.5,83.9 222.5,85.8 220.5,89.0 219.1,92.8 220.2,94.8 219.8,98.8 218.6,101.1 219.4,103.3 219.5,104.3 221.4,106.2 223.6,108.2 224.7,110.2 226.5,111.9 229.2,113.6 231.8,115.1 234.6,114.1 238.0,114.1 240.0,114.3 243.3,113.1 245.4,112.5 247.9,112.7 249.9,115.2 251.4,115.1 253.4,114.8 254.4,115.9 255.2,117.6 254.8,119.7 254.4,122.3 256.1,124.4 257.9,126.4 258.5,129.1 259.5,131.5 260.3,135.1 260.6,137.1 258.8,139.3 257.9,143.2 257.9,145.2 259.7,148.6 261.5,151.8 261.9,155.3 263.1,158.0 264.2,159.5 265.3,162.0 266.5,163.6 266.2,164.8 266.9,166.7 268.2,167.8 270.9,167.2 272.9,166.7 276.3,166.6 278.3,166.0 280.3,164.7 282.3,162.9 284.1,160.5 285.6,159.3 286.2,156.2 286.0,155.3 289.1,153.9 289.7,150.6 289.5,149.2 288.8,147.6 291.5,145.2 294.2,144.0 296.5,141.7 296.6,137.8 296.2,135.0 295.1,131.8 294.7,129.7 294.3,127.7 295.5,126.1 297.0,124.4 298.5,122.3 300.5,119.9 303.8,117.9 306.3,115.4 307.9,112.9 309.5,109.6 310.6,106.9 311.0,105.1 307.2,105.8 304.5,106.5 301.8,107.0 300.3,105.4 299.3,104.2 297.8,102.2 295.8,100.2 294.7,98.4 293.6,96.8 292.3,95.6 292.0,92.8 291.5,91.2 289.7,89.8 289.7,88.7 288.5,86.3 287.6,84.4 286.6,83.0 285.8,80.8 285.4,78.9 283.7,78.5 281.9,79.1 279.6,79.3 275.9,78.5 272.9,77.3 270.2,76.9 268.9,78.0 268.5,79.9 266.9,80.1 264.9,79.3 262.8,78.2 262.4,77.4 258.9,76.9 256.8,76.2 255.8,75.0 256.8,73.3 256.5,71.3 255.2,70.9 253.3,71.4 250.5,71.1 248.0,71.4 245.4,71.9 243.3,71.9 241.3,72.9 239.0,73.8 237.0,73.5 235.3,73.0Z M394.6,150.6 395.0,156.0 395.5,159.3 396.6,162.7 396.6,166.7 400.6,168.1 404.7,166.6 408.0,166.7 411.4,164.4 415.4,163.5 418.1,163.4 421.5,164.0 424.2,167.8 426.9,165.4 427.3,168.7 430.2,171.4 434.9,173.2 438.7,173.4 441.0,171.8 443.7,171.4 444.7,167.4 447.0,164.0 448.4,159.3 448.0,154.6 445.0,152.6 443.0,150.6 440.3,147.2 438.3,144.5 437.5,141.2 435.3,139.8 433.6,135.4 432.4,138.5 432.2,143.2 430.9,144.5 429.3,144.3 426.2,142.2 424.2,140.9 425.8,137.4 423.5,137.1 420.1,136.5 418.1,137.4 416.1,140.9 413.4,139.8 410.7,140.5 408.7,143.2 406.3,144.5 405.3,146.9 401.3,148.4 398.9,148.7 395.9,150.3Z M162.0,57.1 166.7,56.9 170.7,58.1 171.1,56.5 167.4,53.8 166.7,51.8 164.7,53.1 162.7,55.8Z M308.3,137.1 309.8,141.4 309.0,144.1 307.2,148.6 305.5,154.3 302.8,155.3 300.9,152.6 300.2,149.9 301.7,147.2 301.4,143.9 304.2,142.1 306.5,139.6Z M436.5,175.7 441.4,176.0 440.8,179.1 439.0,179.6 437.2,177.9Z M474.2,167.2 476.6,168.7 478.5,171.1 482.0,171.7 480.0,173.8 478.6,176.5 477.0,176.5 477.3,174.8 475.7,173.7 476.7,171.4 474.9,168.3Z M474.2,175.5 476.3,177.1 474.9,179.1 472.2,180.8 471.2,182.6 469.2,183.7 465.8,182.8 467.9,180.6 471.2,178.5Z M234.3,53.8 238.0,53.0 240.7,52.8 243.9,52.2 243.1,51.4 244.3,50.1 242.4,49.7 242.0,48.9 240.4,47.6 239.8,46.2 238.6,45.7 239.6,43.6 237.4,43.4 237.8,42.2 235.3,42.2 234.2,43.7 234.5,45.3 233.7,46.1 235.5,47.3 237.4,47.9 237.7,49.2 235.8,49.3 236.4,50.7 235.0,51.5 237.7,51.9 236.4,52.2Z M233.9,50.8 233.9,49.5 234.3,47.5 231.9,46.7 230.4,47.6 228.6,48.4 228.7,50.0 228.2,51.4 231.0,51.6Z M211.8,35.0 209.7,32.9 212.4,31.7 217.8,32.0 221.8,31.7 223.7,33.5 221.8,34.6 217.1,35.8 213.8,35.2Z M311.9,24.9 315.9,25.9 320.7,26.1 318.6,23.5 324.0,19.5 333.4,17.7 329.4,17.5 320.0,19.5 315.9,22.2Z M-0.7,24.9 3.4,24.9 2.7,25.8 -0.7,25.8Z M432.6,59.0 434.9,58.5 433.6,56.5 434.5,52.4 434.7,49.1 433.7,48.0 433.2,51.1 432.6,55.1 432.9,57.1Z M418.0,74.9 420.1,73.4 424.2,73.1 426.1,70.9 428.2,70.2 430.2,67.9 430.2,65.6 432.1,65.3 432.9,67.9 431.6,69.9 431.6,71.9 431.3,73.1 430.0,74.1 428.6,74.5 426.2,74.5 424.6,76.0 423.5,74.5 420.8,74.9 418.8,75.4Z M430.2,65.2 430.0,63.5 432.2,62.5 432.8,60.0 434.9,61.4 437.3,61.4 437.6,62.8 434.7,64.5 431.8,64.8Z M416.5,76.2 417.2,78.9 418.5,78.8 419.5,76.0 418.1,75.3Z M420.1,76.6 420.8,75.0 423.0,75.0 422.6,76.2Z M403.6,90.3 404.7,91.6 405.9,87.7 405.3,87.0 404.4,87.7Z M388.1,95.1 390.3,94.0 391.2,94.6 389.9,96.4 388.8,96.3Z M403.7,96.3 406.3,96.1 406.7,98.1 405.5,100.0 406.0,102.2 408.7,102.9 408.0,103.9 405.3,102.6 404.1,101.8 403.3,99.4 404.0,98.4Z M406.0,111.7 407.2,110.5 408.7,109.7 410.7,107.8 412.1,109.6 411.8,112.3 410.6,113.5 408.7,112.3Z M399.6,109.7 402.7,105.8 403.1,106.9 400.6,109.8Z M409.4,104.2 411.0,106.2 409.8,107.6Z M406.0,105.1 407.4,106.3 407.6,108.6 406.7,106.9Z M388.5,119.0 389.5,118.3 391.5,117.6 393.9,116.7 395.3,114.9 397.3,113.9 399.0,111.9 400.2,112.4 402.3,113.9 400.6,114.9 400.4,118.3 402.0,119.8 400.0,120.9 399.3,123.0 398.6,125.3 398.0,126.4 396.3,126.4 393.9,125.3 391.2,125.0 390.2,124.9 389.9,123.0 388.5,121.7Z M370.1,113.5 373.1,114.0 374.7,115.9 377.1,118.2 378.6,118.6 381.2,121.0 382.5,123.0 384.5,125.0 384.5,127.1 384.2,128.8 382.8,128.9 381.2,127.7 379.5,126.4 377.8,124.5 376.7,122.3 375.1,120.3 374.4,118.7 372.8,117.0 371.6,115.8Z M383.4,130.1 385.2,129.1 387.9,129.7 390.6,130.1 393.2,130.3 395.9,131.5 395.8,132.7 392.6,132.0 389.9,131.9 387.2,131.4 385.2,130.9Z M396.6,132.3 398.6,132.4 401.3,132.2 406.0,132.4 407.4,132.2 410.1,132.0 412.7,132.2 410.1,133.9 408.0,134.8 403.3,134.4 399.3,133.1Z M402.0,128.4 403.9,128.5 404.0,124.8 404.8,124.8 406.0,127.5 407.4,127.3 405.5,123.6 407.8,122.3 405.1,122.2 404.1,121.3 404.7,119.7 407.1,119.8 409.8,118.8 409.4,120.5 403.6,120.6 403.1,121.1 401.7,124.6 402.5,125.7Z M413.6,119.7 414.8,118.0 414.5,120.7 414.1,122.1Z M414.1,125.3 417.9,125.7 416.1,124.8Z M418.0,122.7 419.5,121.5 422.2,122.2 423.5,125.4 426.9,123.0 430.2,124.2 433.6,125.3 436.3,126.2 438.0,127.7 440.3,129.3 440.7,131.8 441.7,133.1 443.7,134.8 444.6,135.1 443.0,134.8 440.3,134.4 439.0,133.0 436.3,131.2 434.7,132.0 434.5,133.1 433.6,133.5 431.6,133.2 429.8,131.9 428.2,132.2 427.1,128.1 424.2,126.9 422.2,126.1 420.8,126.4 419.5,124.8 421.5,124.1 419.5,123.7Z M441.7,128.4 443.7,128.4 446.4,126.6 445.7,128.4 443.7,129.5Z M349.4,107.8 350.8,108.9 352.1,110.9 351.3,112.7 349.7,112.9 349.2,110.5Z M127.7,91.6 130.4,90.1 133.8,89.8 137.8,91.4 140.5,92.8 142.2,93.8 137.8,94.2 137.1,92.9 133.8,91.7 131.1,91.2Z M141.8,96.1 144.1,94.2 147.9,94.4 150.0,96.0 147.9,96.5 145.9,97.3 143.9,96.7Z M136.7,96.3 139.4,96.8 138.5,97.1Z M151.7,96.1 153.8,96.4 153.3,96.8Z M159.3,189.8 164.0,189.8 163.4,191.2 160.7,190.9Z M258.7,70.0 263.0,69.5 262.3,71.7Z M253.0,65.9 255.0,65.9 254.8,68.4 253.3,68.6Z M253.6,63.7 254.8,63.2 254.6,65.3Z M273.6,73.3 277.4,73.5 275.2,74.1Z M285.4,73.9 288.4,73.1 287.0,74.5Z M-0.7,242.0 -0.7,234.3 22.9,234.3 29.6,231.6 20.2,228.6 32.3,226.9 40.3,223.9 53.8,222.5 73.9,220.8 103.5,218.5 129.1,219.5 141.2,217.8 150.6,214.4 161.3,209.1 168.1,203.0 164.0,206.4 161.3,212.4 160.0,217.8 154.6,221.8 141.2,223.9 131.8,226.5 147.9,229.9 162.0,232.5 177.5,230.6 191.9,229.0 211.3,223.4 227.2,216.5 246.0,215.9 262.2,215.8 289.7,214.7 314.6,211.1 325.4,211.8 334.8,218.5 338.8,215.1 352.2,213.2 379.1,209.7 422.2,209.7 454.4,214.8 471.9,218.5 469.2,223.2 457.1,225.9 454.4,229.9 463.8,231.9 473.2,233.7 484.7,234.6 484.7,242.0Z" fill="#00ff00" stroke="#000" stroke-width="1" shape-rendering="crispEdges"/>
<path d="M121.0,24.2 127.7,22.2 134.4,21.9 139.8,23.5 145.2,24.9 150.6,26.9 151.9,28.9 157.3,31.2 159.3,32.3 156.0,34.3 155.3,36.3 150.6,37.0 146.5,35.6 143.9,34.3 138.5,34.3 137.1,32.9 143.9,30.2 141.2,28.9 137.1,27.6 131.8,27.2 126.4,26.2 122.3,25.5Z M82.0,24.9 84.7,22.2 94.1,22.2 102.2,22.2 106.9,23.5 106.2,26.9 102.2,28.2 94.1,28.2 88.7,27.8 83.4,26.9Z M73.9,24.2 76.0,20.8 84.0,19.5 86.7,21.5 80.7,24.9Z M121.0,17.5 129.1,18.1 135.8,18.1 142.5,15.5 147.9,13.4 157.3,11.4 158.6,10.1 150.6,9.4 137.1,9.4 123.7,10.8 118.3,12.1 123.7,14.8Z M118.3,20.8 134.4,20.8 134.4,18.4 123.7,18.1 117.0,18.8Z M125.0,35.0 133.8,35.4 127.7,37.0Z M104.9,23.5 112.9,22.9 118.3,23.5 114.3,26.9Z M83.4,18.8 100.8,17.5 107.6,18.8 110.2,20.2 100.8,20.8 91.4,20.8Z M91.4,15.7 107.6,14.1 112.9,16.1 103.5,16.8Z M107.6,22.9 111.6,20.8 117.0,21.1 114.3,23.5Z M78.0,16.8 87.4,16.1 91.4,18.1 83.4,18.8Z M96.8,14.8 104.9,12.8 112.9,13.4 107.6,15.5Z M127.7,13.4 139.8,11.4 150.6,12.1 137.1,14.1Z M123.7,26.9 129.1,26.2 126.4,24.2 121.0,24.9Z M100.8,27.6 111.6,26.2 110.2,28.2Z" fill="#00ff00" stroke="#000" stroke-width="2"/>
<path d="M143.9,15.9 150.6,13.4 158.6,11.4 168.1,10.4 181.5,10.1 194.9,8.7 208.4,9.0 217.8,10.8 225.9,11.4 216.5,13.4 217.8,17.5 215.1,20.2 212.4,22.9 212.4,26.2 208.4,28.9 200.3,29.6 194.9,32.3 190.9,32.9 188.2,34.3 185.5,37.6 184.2,40.3 181.5,39.9 177.5,39.0 174.8,36.3 172.1,33.6 170.7,30.9 169.4,27.6 171.4,26.2 168.1,24.9 166.7,22.2 164.0,19.5 158.6,18.4 150.6,18.1 146.5,17.1Z" fill="#00ff00" stroke="#000" stroke-width="1.8"/>
<path d="M256.8,15.5 263.5,18.1 271.6,16.8 278.3,13.4 268.9,12.8 258.1,13.7Z M371.1,14.8 377.8,15.5 383.2,14.1 376.4,12.1 368.4,12.8Z M426.2,20.8 432.9,22.6 441.0,20.2 430.2,19.1Z M302.5,12.8 315.9,13.4 328.0,12.4 315.9,11.4Z" fill="#00ff00" stroke="#000" stroke-width="2.2"/>
<path d="M279.0,63.9 279.6,65.5 281.0,65.6 283.7,65.6 287.0,64.5 290.4,64.9 293.8,66.0 297.8,65.2 298.1,63.9 295.5,62.5 293.4,61.3 291.7,60.2 289.7,60.1 287.0,61.2 285.7,60.0 287.0,59.2 284.6,58.3 283.0,59.2 281.8,60.2 280.6,61.4 279.6,62.9Z M305.2,59.8 308.1,58.5 310.8,57.8 313.5,58.2 313.3,60.1 311.0,61.2 312.6,63.7 314.6,65.2 314.3,66.4 313.3,68.2 314.3,70.9 310.6,71.7 307.9,70.3 307.7,68.8 308.5,67.0 307.2,64.8 305.9,63.2 305.7,61.2Z M118.3,55.8 123.7,55.4 128.4,58.1 125.0,58.5 121.0,58.1Z M123.7,61.8 124.4,64.8 125.7,64.5 126.4,59.4 128.0,59.4 131.1,62.5 131.8,59.8 134.4,61.2 132.4,63.9 135.8,63.5 130.4,64.8 129.1,59.4Z M322.7,58.5 324.7,60.5 321.3,61.8 320.7,59.8Z" fill="#c0c0c0" stroke="#000" stroke-width="1" shape-rendering="crispEdges"/>
<path d="M37.6,42.4 29.6,45.0 21.5,47.7 13.4,50.0 5.4,51.4 -0.7,51.1" fill="none" stroke="#000" stroke-width="1.5" stroke-dasharray="5 2"/>
<path d="M76.6,55.1 114.3,55.1 114.3,54.6 121.7,56.5 128.4,58.5 131.1,60.1 130.4,64.5 135.8,63.5 139.1,61.8 141.6,60.5 146.5,60.5 148.6,57.3 150.8,57.8 151.9,60.5 M52.4,27.3 52.4,39.9 57.8,41.7 63.2,45.0 67.2,46.4 M84.6,77.3 87.8,77.0 92.8,78.9 96.5,78.9 98.8,78.2 101.5,81.2 103.5,82.0 105.7,80.9 108.2,84.0 111.3,86.2 M118.0,101.5 119.7,97.1 122.1,97.1 122.1,99.6 M121.9,101.6 123.7,102.3 124.4,103.3 M126.8,106.1 129.5,106.3 M130.5,110.1 130.9,108.1 M138.1,110.2 141.2,111.6 144.5,110.9 145.2,105.9 M145.2,110.9 151.2,112.7 150.8,119.0 148.6,119.7 147.9,126.4 143.9,124.4 141.2,121.3 136.1,119.1 M151.2,112.7 158.6,115.4 160.4,114.4 161.3,109.6 M158.6,115.4 161.3,119.4 165.4,118.3 169.4,118.0 172.1,117.9 M165.4,112.9 165.4,118.3 M169.4,113.2 169.4,118.0 M141.2,121.3 134.2,125.7 M147.9,126.4 143.9,130.4 144.5,134.4 149.2,135.8 148.6,139.8 149.2,144.5 M149.2,135.8 154.1,134.2 158.2,138.9 161.3,141.2 164.0,142.5 164.3,147.2 158.0,151.0 154.6,150.6 151.7,151.5 149.9,149.2 149.2,144.5 147.5,145.6 M158.0,151.0 161.3,153.0 164.0,153.3 168.1,153.3 168.7,155.7 167.2,157.7 163.4,157.7 M164.3,147.2 168.1,153.3 M149.9,150.6 150.2,157.3 147.9,161.3 147.9,168.1 146.3,174.8 145.9,181.5 144.5,185.5 143.6,188.9 149.2,190.9 M164.6,161.6 170.2,166.4 M164.6,161.6 167.2,157.7 M230.3,83.8 230.4,80.7 239.3,78.0 240.0,73.9 M224.5,83.9 230.3,83.8 235.5,87.4 233.3,87.7 234.9,98.8 226.5,100.3 225.6,101.2 219.5,98.8 M235.5,87.4 243.6,93.2 247.6,95.2 247.6,98.8 242.3,101.0 241.1,100.6 238.2,100.8 234.9,98.8 M247.6,95.2 258.1,89.4 260.8,90.1 263.2,93.4 262.8,98.1 260.1,102.2 258.7,103.3 254.1,103.8 247.5,102.9 242.3,101.0 M258.1,89.4 255.4,87.4 254.8,80.7 255.4,77.3 257.5,76.5 M253.4,71.4 253.0,74.6 252.1,77.3 254.8,80.7 M260.8,90.1 267.5,89.4 274.3,94.8 274.3,100.2 272.2,103.5 271.6,106.2 267.3,108.9 262.8,108.2 260.1,102.2 M275.6,78.5 275.6,91.4 274.3,94.8 M275.6,91.4 292.0,91.4 M274.3,100.2 274.3,108.2 279.0,114.3 283.4,116.2 287.7,115.9 290.4,114.3 290.4,110.2 287.0,109.6 285.0,104.9 290.3,101.5 291.7,98.1 293.6,96.8 M279.0,114.3 274.3,114.3 267.5,114.5 264.2,118.3 263.5,115.6 262.2,112.0 261.5,115.6 254.9,118.0 M262.2,112.0 257.5,112.1 255.4,114.9 253.4,114.8 M254.1,103.8 254.1,108.9 257.5,112.1 M247.5,102.9 246.8,105.3 245.8,108.9 245.4,112.5 M238.2,100.8 234.6,106.9 238.0,106.9 242.0,106.2 243.3,112.9 M234.6,106.9 231.2,106.9 226.5,104.3 223.6,104.3 221.4,106.2 M231.2,106.9 230.6,110.9 231.8,115.1 M238.0,106.9 238.0,114.1 M226.5,104.3 224.5,110.2 M261.5,115.6 261.5,127.7 258.5,129.1 M264.2,118.3 265.5,125.0 263.5,129.1 259.5,131.5 M283.4,116.2 281.7,122.3 281.0,127.1 283.0,132.0 280.3,132.4 280.5,136.5 274.3,135.8 271.6,138.5 271.6,143.2 273.6,145.2 268.9,145.2 268.9,150.6 268.9,158.6 265.5,159.7 M263.5,129.1 270.2,130.4 274.3,135.8 M258.1,144.3 269.6,145.1 274.3,144.7 276.3,144.9 281.0,142.5 286.4,143.9 285.7,149.2 284.4,150.8 278.3,151.2 275.6,155.6 272.9,155.0 268.9,154.6 M281.0,142.5 283.0,139.8 286.4,139.8 289.1,136.5 288.4,134.4 M280.5,136.5 285.7,133.8 288.4,134.4 290.4,136.2 296.5,135.1 M281.7,122.3 287.7,122.3 292.4,125.7 295.5,126.6 M287.7,122.3 287.7,115.9 M287.7,115.9 297.8,115.6 298.3,122.3 M290.4,114.3 297.8,115.6 301.2,114.4 306.3,110.2 300.3,105.4 M285.7,149.2 285.0,156.8 M294.7,144.0 289.1,143.9 M239.6,62.7 246.3,64.0 M229.9,64.8 233.5,64.8 232.6,69.2 231.9,71.0 M245.4,52.4 248.0,54.0 250.1,54.4 252.8,55.1 252.1,57.1 250.1,58.8 251.4,59.8 252.2,62.1 M250.3,54.3 250.1,52.4 250.1,50.7 251.4,49.1 M247.4,51.9 250.1,52.4 M253.4,47.1 255.4,47.3 M252.1,57.1 254.8,57.1 258.1,57.1 260.1,55.7 258.4,53.4 261.6,52.4 262.2,52.4 261.2,48.7 M251.4,59.8 255.4,58.5 258.8,58.3 260.8,58.5 260.4,59.7 M258.1,57.1 264.9,56.5 264.2,58.5 260.8,58.5 M261.6,52.4 264.2,53.5 267.3,54.4 272.2,55.0 274.3,53.1 273.6,51.1 273.6,48.4 271.6,47.1 M264.9,56.5 267.5,56.5 272.2,56.1 272.2,55.0 M264.2,58.5 267.5,59.4 270.2,58.9 272.2,56.1 M270.2,58.9 268.9,61.8 272.2,61.8 272.2,63.2 272.2,64.1 272.9,65.5 269.6,65.9 M267.5,59.4 268.2,63.2 266.9,63.9 M264.2,58.5 262.8,60.2 264.9,60.4 267.5,60.5 M272.2,56.1 277.6,56.2 279.6,56.5 282.3,59.2 279.9,59.8 281.7,60.2 M272.2,61.8 277.0,62.2 280.3,62.2 M272.9,65.5 277.0,64.9 279.6,64.5 M274.3,53.1 277.0,51.2 283.7,51.1 285.0,50.7 287.7,52.2 295.8,54.2 293.1,57.1 293.1,57.8 M273.6,48.4 278.3,46.0 279.9,45.4 284.8,51.0 M270.2,45.6 277.6,46.1 279.9,45.4 279.0,43.7 274.7,43.3 M279.0,43.7 279.6,41.0 M279.0,39.7 282.3,38.2 282.1,35.0 282.3,30.2 280.6,28.2 274.3,28.5 270.2,28.0 M270.2,28.0 273.9,32.5 M258.8,39.7 258.1,38.3 258.8,35.6 260.8,34.3 263.2,29.6 265.5,28.9 269.6,28.1 M277.2,65.9 279.6,64.5 M290.7,71.8 293.1,71.5 298.9,71.0 301.8,71.0 301.8,67.9 300.5,65.7 297.8,65.2 M290.7,71.8 290.3,73.5 M289.7,76.6 290.4,75.6 294.2,76.1 297.1,74.8 298.9,71.0 M289.1,81.3 290.4,81.6 291.7,78.6 294.4,78.0 297.1,74.8 M294.4,78.0 298.5,79.1 302.0,81.9 304.5,81.9 306.4,81.7 M302.0,81.9 304.5,81.9 M307.2,80.0 305.9,76.6 303.8,73.9 302.5,71.7 301.8,71.0 M300.5,65.7 304.5,65.7 306.5,69.2 307.7,69.1 M304.5,65.7 302.5,63.2 305.2,59.8 M290.4,64.9 295.1,62.5 M295.8,54.2 304.5,55.8 305.9,53.1 310.6,51.8 315.9,52.6 324.0,52.4 324.0,48.5 330.7,47.1 334.8,46.7 340.1,48.4 345.5,49.3 349.6,52.7 353.6,52.4 359.0,54.9 M313.3,60.1 317.3,60.5 317.3,65.5 320.7,63.9 322.1,64.5 324.0,61.8 325.4,62.5 328.0,62.2 330.7,63.2 332.8,65.6 334.8,65.5 337.2,64.5 340.8,63.9 342.2,63.2 349.6,63.5 350.2,60.5 353.6,57.7 357.0,57.8 359.0,54.9 M313.3,68.2 315.9,69.9 320.0,70.6 323.7,71.9 324.3,73.1 326.3,73.5 328.7,71.0 330.2,70.9 333.8,71.3 336.1,70.3 338.1,71.1 342.2,70.7 341.5,69.1 M317.3,65.5 321.3,65.2 M323.7,71.9 324.7,78.6 323.9,81.1 326.7,81.3 327.1,84.3 325.0,87.3 M324.0,78.6 331.1,80.8 333.4,78.6 336.5,76.0 335.4,75.3 337.9,72.6 342.2,70.7 M341.5,69.1 337.5,68.0 335.4,67.2 337.5,66.1 340.1,65.9 337.2,64.5 M342.2,70.7 343.9,71.8 345.5,73.0 347.9,74.9 348.9,77.3 347.9,78.9 350.2,81.2 354.9,83.1 360.3,83.6 361.4,84.3 365.7,84.8 369.7,82.0 372.8,83.1 374.4,86.7 376.4,91.4 378.5,92.4 379.0,90.9 385.2,90.3 387.9,92.0 M336.5,76.0 335.4,79.3 332.1,87.4 331.4,86.9 M334.5,88.5 337.5,88.1 336.1,83.6 339.5,80.9 342.2,78.0 343.5,77.0 345.5,73.0 M350.2,81.2 350.9,83.0 354.9,84.4 360.3,85.4 360.6,83.6 M360.3,85.4 361.7,86.7 361.0,91.4 M365.7,92.1 366.4,89.4 365.0,88.1 365.7,87.4 369.7,85.4 372.8,83.1 M366.4,89.4 367.7,88.1 369.3,86.7 M374.4,86.7 373.4,89.0 375.0,90.8 375.4,93.8 377.1,93.7 377.9,92.0 M375.4,93.8 374.2,97.5 375.0,99.2 374.4,101.5 375.5,106.2 374.6,107.6 M377.1,93.7 378.2,97.3 382.8,97.5 383.8,100.3 383.6,101.9 380.1,102.4 379.8,104.6 M383.8,100.3 386.3,100.8 386.5,104.2 384.4,106.2 382.8,106.9 M377.9,92.0 379.4,92.1 383.8,96.1 386.3,100.8 M377.1,112.3 379.1,112.8 M353.6,52.4 360.0,54.9 364.3,56.5 366.4,60.5 371.1,63.6 376.4,63.7 383.2,64.9 391.2,63.2 391.9,60.5 396.6,57.1 400.0,56.9 402.7,57.1 400.0,54.4 398.0,54.0 387.2,54.6 380.5,52.4 374.4,51.1 373.1,53.1 365.7,52.7 360.3,54.6 M400.0,54.4 403.3,50.4 411.4,50.4 414.1,54.3 423.2,55.9 418.1,60.5 417.5,63.9 M409.1,67.4 416.1,64.0 417.7,64.1 M411.5,70.3 414.6,69.2" fill="none" stroke="#000" stroke-width="1" shape-rendering="crispEdges"/>
<rect x="30.5" y="92.5" width="2" height="2" fill="#000"/><rect x="32.5" y="94.5" width="2" height="2" fill="#000"/><rect x="27.5" y="90.5" width="2" height="2" fill="#000"/><rect x="118.5" y="121.5" width="2" height="2" fill="#000"/><rect x="203.5" y="68.5" width="2" height="2" fill="#000"/><rect x="219.5" y="82.5" width="2" height="2" fill="#000"/><rect x="209.5" y="98.5" width="2" height="2" fill="#000"/><rect x="222.5" y="131.5" width="2" height="2" fill="#000"/><rect x="233.5" y="141.5" width="2" height="2" fill="#000"/><rect x="224.5" y="170.5" width="2" height="2" fill="#000"/><rect x="318.5" y="147.5" width="2" height="2" fill="#000"/><rect x="316.5" y="148.5" width="2" height="2" fill="#000"/><rect x="316.5" y="126.5" width="2" height="2" fill="#000"/><rect x="340.5" y="116.5" width="2" height="2" fill="#000"/><rect x="334.5" y="186.5" width="2" height="2" fill="#000"/><rect x="310.5" y="182.5" width="2" height="2" fill="#000"/><rect x="292.5" y="183.5" width="2" height="2" fill="#000"/><rect x="191.5" y="193.5" width="2" height="2" fill="#000"/><rect x="205.5" y="198.5" width="2" height="2" fill="#000"/><rect x="160.5" y="204.5" width="2" height="2" fill="#000"/><rect x="345.5" y="172.5" width="2" height="2" fill="#000"/><rect x="94.5" y="156.5" width="2" height="2" fill="#000"/><rect x="133.5" y="165.5" width="2" height="2" fill="#000"/><rect x="66.5" y="154.5" width="2" height="2" fill="#000"/><rect x="40.5" y="144.5" width="2" height="2" fill="#000"/><rect x="53.5" y="132.5" width="2" height="2" fill="#000"/><rect x="26.5" y="148.5" width="2" height="2" fill="#000"/><rect x="10.5" y="139.5" width="2" height="2" fill="#000"/><rect x="5.5" y="149.5" width="2" height="2" fill="#000"/><rect x="480.5" y="144.5" width="2" height="2" fill="#000"/><rect x="464.5" y="149.5" width="2" height="2" fill="#000"/><rect x="466.5" y="141.5" width="2" height="2" fill="#000"/><rect x="456.5" y="133.5" width="2" height="2" fill="#000"/><rect x="453.5" y="111.5" width="2" height="2" fill="#000"/><rect x="422.5" y="110.5" width="2" height="2" fill="#000"/><rect x="436.5" y="102.5" width="2" height="2" fill="#000"/><rect x="437.5" y="100.5" width="2" height="2" fill="#000"/><rect x="471.5" y="111.5" width="2" height="2" fill="#000"/><rect x="474.5" y="118.5" width="2" height="2" fill="#000"/><rect x="4.5" y="179.5" width="2" height="2" fill="#000"/><rect x="455.5" y="193.5" width="2" height="2" fill="#000"/><rect x="464.5" y="188.5" width="2" height="2" fill="#000"/><rect x="154.5" y="77.5" width="2" height="2" fill="#000"/><rect x="197.5" y="125.5" width="2" height="2" fill="#000"/><rect x="8.5" y="33.5" width="2" height="2" fill="#000"/><rect x="12.5" y="43.5" width="2" height="2" fill="#000"/><rect x="62.5" y="47.5" width="2" height="2" fill="#000"/><rect x="260.5" y="190.5" width="2" height="2" fill="#000"/><rect x="137.5" y="86.5" width="2" height="2" fill="#000"/><rect x="136.5" y="88.5" width="2" height="2" fill="#000"/><rect x="139.5" y="88.5" width="2" height="2" fill="#000"/><rect x="159.5" y="101.5" width="2" height="2" fill="#000"/><rect x="158.5" y="98.5" width="2" height="2" fill="#000"/><rect x="159.5" y="106.5" width="2" height="2" fill="#000"/><rect x="236.5" y="193.5" width="2" height="2" fill="#000"/><rect x="366.5" y="104.5" width="2" height="2" fill="#000"/><rect x="367.5" y="110.5" width="2" height="2" fill="#000"/>
<path d="M143.2,177.5 141.8,181.5 140.8,185.5 140.8,189.6 142.5,192.3 145.9,194.3 150.6,195.2" fill="none" stroke="#000" stroke-width="3.0" stroke-dasharray="4 1.5"/><path d="M52.4,40.3 57.8,41.9 61.8,43.7 64.5,46.4 67.2,48.4 69.9,51.8 72.6,53.8 74.6,55.8" fill="none" stroke="#000" stroke-width="2.2" stroke-dasharray="4 1.5"/><path d="M248.7,40.3 248.7,37.6 252.8,35.6 256.8,33.9 259.5,31.6 262.2,28.9 266.2,27.6 270.2,26.6 275.6,25.5 282.3,26.5" fill="none" stroke="#000" stroke-width="2.0" stroke-dasharray="4 1.5"/><path d="M169.4,27.6 166.7,24.2 164.0,19.5 158.6,18.4 150.6,18.1 146.5,17.1" fill="none" stroke="#000" stroke-width="2.0" stroke-dasharray="4 1.5"/><path d="M184.2,40.3 188.2,34.3 194.9,32.3 200.3,29.6 208.4,28.9 212.4,26.2 215.1,20.2 217.8,17.5 216.5,13.4" fill="none" stroke="#000" stroke-width="2.0" stroke-dasharray="4 1.5"/><path d="M150.6,214.4 157.3,209.7 162.7,207.0 166.7,204.4" fill="none" stroke="#000" stroke-width="2.2" stroke-dasharray="4 1.5"/><path d="M322.7,28.2 333.4,28.9 336.1,22.9 349.6,22.2 363.0,19.4 376.4,18.3 393.9,19.5 410.1,22.2 430.2,23.5 457.1,26.9 484.0,28.2" fill="none" stroke="#000" stroke-width="1.8" stroke-dasharray="4 1.5"/><path d="M402.0,113.6 406.0,111.6 408.7,107.6 407.4,103.5 404.7,96.8" fill="none" stroke="#000" stroke-width="1.8" stroke-dasharray="4 1.5"/><path d="M437.6,62.1 441.0,60.5 445.0,57.8 449.0,55.1 452.1,52.7" fill="none" stroke="#000" stroke-width="1.5" stroke-dasharray="4 1.5"/><path d="M473.2,50.0 478.6,51.1 484.7,51.4" fill="none" stroke="#000" stroke-width="1.5" stroke-dasharray="4 1.5"/>
<path d="M322.7,80.7 336.1,121.0 416.8,96.8 403.3,56.5Z" fill="rgba(150,230,230,0.9)" stroke="#ff0000" stroke-width="2"/>
</g>
<rect x="0" y="0" width="485" height="243" fill="none" stroke="#000" stroke-width="1"/>
</svg>
<div class="t" style="right:560px;top:371.5px;color:#000;font-size:12px">90°N</div>
<div class="t" style="right:560px;top:411.8px;color:#000;font-size:12px">60°N</div>
<div class="t" style="right:560px;top:452.2px;color:#000;font-size:12px">30°N</div>
<div class="t" style="right:560px;top:492.5px;color:#000;font-size:12px">0°</div>
<div class="t" style="right:560px;top:532.8px;color:#000;font-size:12px">30°S</div>
<div class="t" style="right:560px;top:573.2px;color:#000;font-size:12px">60°S</div>
<div class="t" style="right:560px;top:613.5px;color:#000;font-size:12px">90°S</div>
<div class="t" style="left:663.5px;width:120px;text-align:center;top:625px;color:#000;font-size:12px">180°</div>
<div class="t" style="left:744.2px;width:120px;text-align:center;top:625px;color:#000;font-size:12px">120°W</div>
<div class="t" style="left:824.8px;width:120px;text-align:center;top:625px;color:#000;font-size:12px">60°W</div>
<div class="t" style="left:905.5px;width:120px;text-align:center;top:625px;color:#000;font-size:12px">0°</div>
<div class="t" style="left:986.2px;width:120px;text-align:center;top:625px;color:#000;font-size:12px">60°E</div>
<div class="t" style="left:1066.8px;width:120px;text-align:center;top:625px;color:#000;font-size:12px">120°E</div>
<div class="t" style="left:1147.5px;width:120px;text-align:center;top:625px;color:#000;font-size:12px">180°</div>
<svg class="ic" style="left:723.5px;top:379.5px;overflow:visible" width="1" height="1"><path d="M0,40.5H4 M485,40.5H481 M0,80.5H4 M485,80.5H481 M0,120.5H4 M485,120.5H481 M0,161.5H4 M485,161.5H481 M0,201.5H4 M485,201.5H481 M80.5,0V4 M80.5,243V239 M161.5,0V4 M161.5,243V239 M242.5,0V4 M242.5,243V239 M322.5,0V4 M322.5,243V239 M403.5,0V4 M403.5,243V239" stroke="#000" stroke-width="1"/></svg>
<svg class="ic" style="left:1073.1px;top:460.2px;overflow:visible" width="1" height="1"><path d="M0,-8 L1.9,-2.6 7.6,-2.5 3,0.9 4.7,6.5 0,3.2 -4.7,6.5 -3,0.9 -7.6,-2.5 -1.9,-2.6Z" fill="#ff0000" stroke="#000" stroke-width="1"/></svg>
<div class="a" style="left:0;top:677px;width:1278px;height:1px;background:#4a4d4f"></div>
</body></html>
